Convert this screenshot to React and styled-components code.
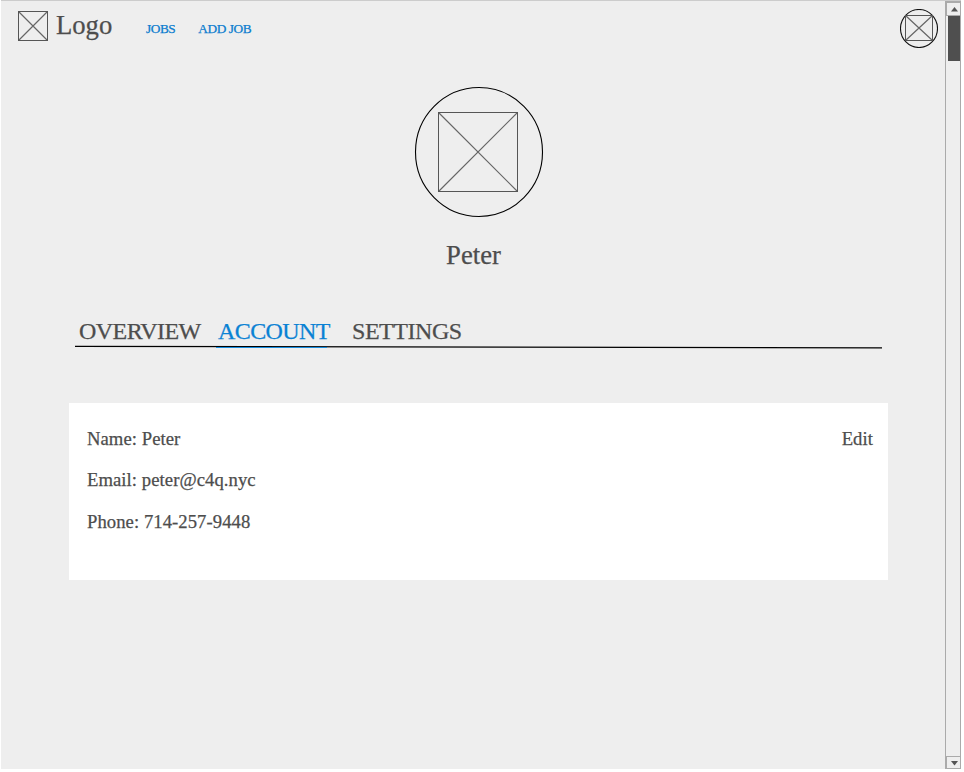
import React from "react";
import styled, { createGlobalStyle } from "styled-components";

const GlobalStyle = createGlobalStyle`
  * { box-sizing: border-box; }
  html, body { margin: 0; background: #fff; overflow: hidden; }
  body {
    font-family: "Liberation Serif", "Times New Roman", serif;
    color: #4d4d4d;
    -webkit-text-stroke: 0.25px currentColor;
  }
`;

const Window = styled.div`
  display: flex;
  width: 960px;
  height: 769px;
  margin-left: 1px;
  background: #eeeeee;
  border-top: 1px solid #cccccc;
`;

const Page = styled.main`
  flex: 1;
  display: flex;
  flex-direction: column;
`;

const Header = styled.header`
  display: flex;
  align-items: flex-start;
  height: 85px;
  padding: 8px 7px 0 17px;
`;

const Brand = styled.div`
  display: flex;
  align-items: flex-start;
  gap: 8px;
  width: 128px;
  padding-top: 2px;
`;

const BrandName = styled.span`
  font-size: 26.67px;
  line-height: 28px;
`;

const Nav = styled.nav`
  display: flex;
  flex: 1;
  gap: 23px;
  padding-top: 12px;
`;

const NavLink = styled.a`
  color: #0a7cce;
  font-size: 13.33px;
  line-height: 15px;
  letter-spacing: -0.45px;
  white-space: nowrap;
`;

const Drawing = styled.svg`
  display: block;
  flex: none;
`;

const Profile = styled.section`
  display: flex;
  flex-direction: column;
  align-items: center;
  height: 230px;
  padding-right: 12px;
`;

const ProfileAvatar = styled.div`
  margin-left: 23px;
`;

const ProfileName = styled.h1`
  margin: 22px 0 0 13px;
  font-size: 26.67px;
  font-weight: 400;
  line-height: 30px;
`;

const Tabs = styled.nav`
  display: grid;
  grid-template-columns: 139px 134px 1fr;
  width: 807px;
  height: 29px;
  margin-left: 74px;
  padding-left: 4px;
`;

const Tab = styled.a`
  color: ${(p) => (p.$active ? "#0a82d4" : "#4d4d4d")};
  font-size: 24px;
  line-height: 30px;
  letter-spacing: ${(p) => p.$tracking};
`;

const TabRule = styled(Drawing)`
  margin-left: 74px;
`;

const Card = styled.section`
  display: flex;
  justify-content: space-between;
  width: 819px;
  height: 177px;
  margin: 54px 0 0 68px;
  padding: 25px 15px 0 18px;
  background: #fff;
  font-size: 18.67px;
  letter-spacing: 0.06px;
`;

const Details = styled.div`
  display: grid;
  grid-template-rows: 41px 42px 22px;
`;

const Detail = styled.div`
  line-height: 22px;
`;

const EditLink = styled.a`
  line-height: 22px;
`;

const Scrollbar = styled.aside`
  display: flex;
  flex-direction: column;
  width: 16px;
  border: solid #aaaaaa;
  border-width: 1px 1px 0;
`;

const ScrollThumb = styled.div`
  width: 12px;
  height: 45px;
  margin-left: 2px;
  background: #4f4f4f;
`;

const ScrollButton = styled.div`
  display: flex;
  justify-content: center;
  align-items: center;
  height: ${(p) => (p.$down ? "13px" : "14px")};
  margin-top: ${(p) => (p.$down ? "auto" : "0")};
  padding: 1px 0 0 2px;
  border: 1px solid #aaaaaa;
  border-right: 0;
`;

function Placeholder({ size }) {
  const e = size - 0.5;
  return (
    <Drawing width={size} height={size} fill="none">
      <path d={`M.5 .5L${e} ${e}M${e} .5L.5 ${e}`} stroke="#666" strokeWidth="1.2" />
      <rect x=".5" y=".5" width={size - 1} height={size - 1} stroke="#555" />
    </Drawing>
  );
}

function ProfilePicture() {
  return (
    <Drawing width="130" height="132" fill="none">
      <ellipse cx="65" cy="66" rx="63.5" ry="64.5" stroke="#000" strokeWidth="1.1" />
      <path d="M24.5 26.5L103.5 105.5M103.5 26.5L24.5 105.5" stroke="#666" strokeWidth="1.2" />
      <rect x="24.5" y="26.5" width="79" height="79" stroke="#555" />
    </Drawing>
  );
}

function AccountPicture() {
  return (
    <Drawing width="38" height="39" fill="none">
      <ellipse cx="19" cy="19.5" rx="18.5" ry="19" stroke="#111" strokeWidth="1.1" />
      <path d="M5.5 6.5L32.5 31.5M32.5 6.5L5.5 31.5" stroke="#666" strokeWidth="1.2" />
      <rect x="5.5" y="6.5" width="27" height="25" stroke="#555" />
    </Drawing>
  );
}

function Arrow({ down }) {
  return (
    <Drawing width="7" height="5" fill="#555">
      <path d={down ? "M0 0H7L3.5 4.5Z" : "M0 4.5H7L3.5 0Z"} />
    </Drawing>
  );
}

export default function App() {
  return (
    <>
      <GlobalStyle />
      <Window>
        <Page>
          <Header>
            <Brand>
              <Placeholder size={30} />
              <BrandName>Logo</BrandName>
            </Brand>
            <Nav>
              <NavLink>JOBS</NavLink>
              <NavLink>ADD JOB</NavLink>
            </Nav>
            <AccountPicture />
          </Header>
          <Profile>
            <ProfileAvatar>
              <ProfilePicture />
            </ProfileAvatar>
            <ProfileName>Peter</ProfileName>
          </Profile>
          <Tabs>
            <Tab $tracking="-0.55px">OVERVIEW</Tab>
            <Tab $active $tracking="-0.6px">ACCOUNT</Tab>
            <Tab $tracking="-0.45px">SETTINGS</Tab>
          </Tabs>
          <TabRule width="807" height="4">
            <path d="M0 1.3L807 2.9" stroke="#000" strokeWidth="1.3" />
            <path d="M141 2.5H252" stroke="#168bdc" />
          </TabRule>
          <Card>
            <Details>
              <Detail>Name: Peter</Detail>
              <Detail>Email: peter@c4q.nyc</Detail>
              <Detail>Phone: 714-257-9448</Detail>
            </Details>
            <EditLink>Edit</EditLink>
          </Card>
        </Page>
        <Scrollbar>
          <ScrollButton><Arrow /></ScrollButton>
          <ScrollThumb />
          <ScrollButton $down><Arrow down /></ScrollButton>
        </Scrollbar>
      </Window>
    </>
  );
}
